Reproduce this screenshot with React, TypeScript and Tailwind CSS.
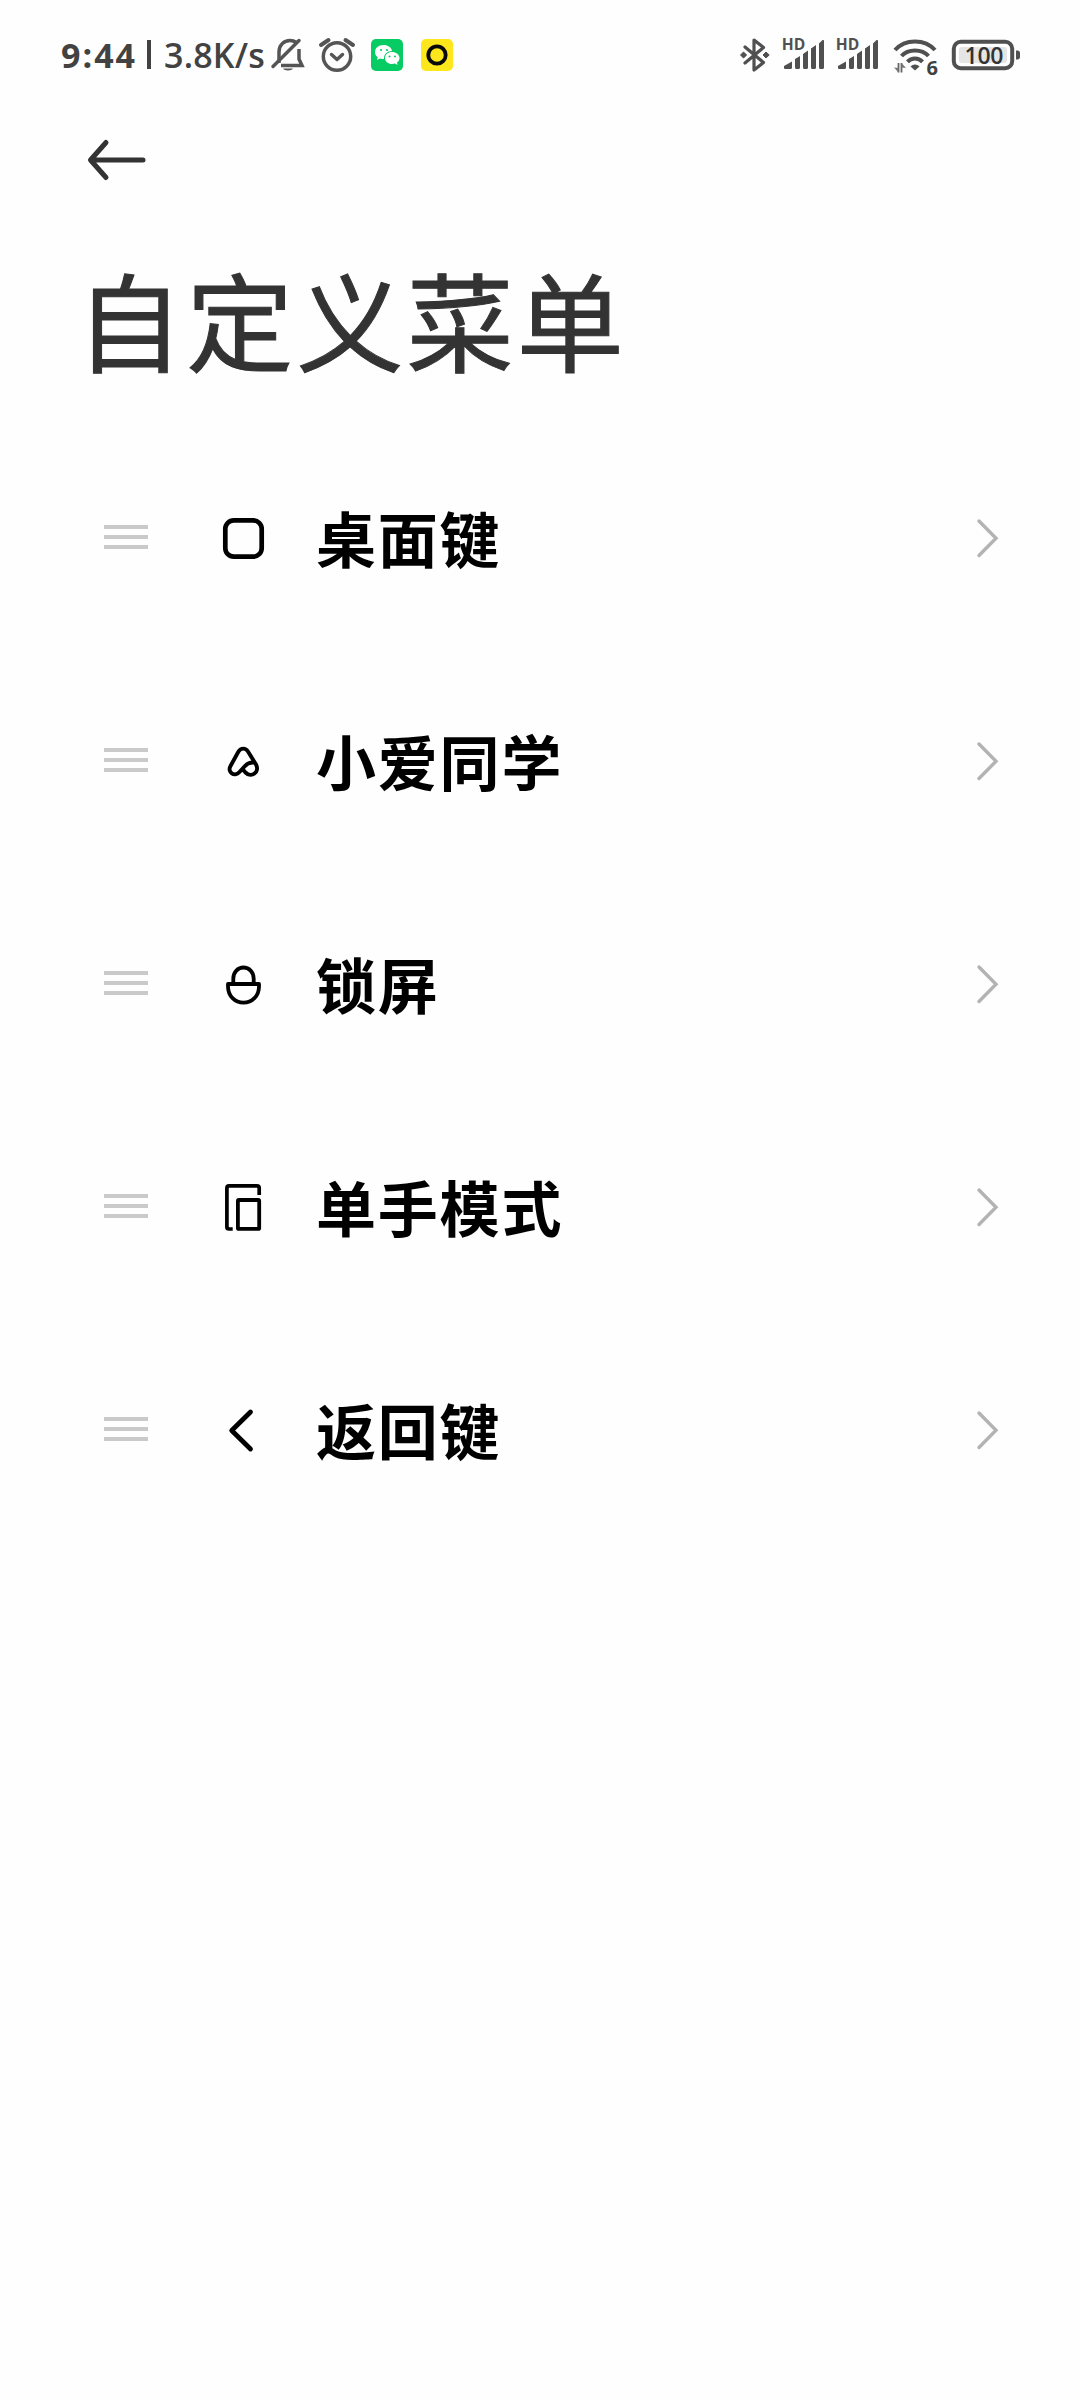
import React from "react";

function StatusBar() {
  return (
    <div className="flex h-[109px] w-full items-center text-[#424242] font-['Open_Sans','Noto_Sans',sans-serif] font-semibold whitespace-nowrap">
      <div className="flex h-[60px] w-[210px] ml-[60px] items-center text-[34px] leading-[60px]">
        <span className="w-[83px] pl-px font-bold tracking-[2px]">9:44</span>
        <span className="ml-[4px] h-[29px] w-[4px] bg-[#424242]" />
        <span className="ml-[13px] tracking-[0.200px]">3.8K/s</span>
      </div>
      <svg className="h-[60px] w-[190px]" viewBox="0 0 190 60" fill="none" stroke="#555" strokeWidth="3.5">
        <g>
          <path d="M9 38V27C9 20 14 15.500 20 15.500C23 15.500 25 16.500 26.500 17.500M29 24V34L32 40.500H11" />
          <path d="M3 41.500L29 15.500" strokeLinecap="round" />
          <path d="M13 43.500H23C22 46 14 46 13 43.500Z" fill="#555" stroke="none" />
        </g>
        <g strokeLinecap="round">
          <circle cx="67" cy="31.500" r="13.700" />
          <path d="M61.500 29.500L67 34.500L72.500 29.500" strokeLinejoin="round" />
          <path d="M51 20L58.500 15M83 20L75.500 15" strokeWidth="4" />
        </g>
        <g stroke="none">
          <rect x="101" y="14" width="32" height="32" rx="5" fill="#07cb63" />
          <path d="M113.500 20C108.500 20 105 23 105 27C105 29.300 106 31 107.700 32.300L107 35L110 33.500C111.500 34 113 34 114 34C113.500 29 117.500 26 122 26C121.500 22.500 118 20 113.500 20Z" fill="#fff" />
          <path d="M122 27C118 27 115 29.600 115 33C115 36.500 118 39 122 39C123 39 124 38.800 125 38.500L127.500 40L127 37.500C128.700 36.400 129.500 34.800 129.500 33C129.500 29.600 126 27 122 27Z" fill="#fff" />
          <g fill="#07cb63">
            <circle cx="111" cy="25" r="1.100" />
            <circle cx="117" cy="25" r="1.100" />
            <circle cx="119.500" cy="31.500" r="1" />
            <circle cx="125" cy="31.500" r="1" />
          </g>
          <rect x="151" y="14" width="32" height="32" rx="5" fill="#fee61c" />
        </g>
        <circle cx="167" cy="30" r="8.700" stroke="#0a0a0a" strokeWidth="3.800" />
      </svg>
      <svg className="ml-[270px] h-[60px] w-[150px]" viewBox="0 0 150 60" fill="none" stroke="#505050">
        <path d="M15 22L33.500 37.500L24 45V15L33.500 22.500L15 38" strokeWidth="3.200" strokeLinejoin="round" strokeLinecap="round" />
        <path d="M13.500 27L16.700 30L13.500 33L10.500 30ZM36 27L39.200 30L36 33L33 30Z" fill="#505050" strokeWidth="1" />
        <SignalBars x={54} />
        <SignalBars x={108} />
      </svg>
      <svg className="h-[60px] w-[150px]" viewBox="0 0 150 60" fill="none" stroke="#505050" strokeWidth="4">
        <path d="M15 25C25 13.500 45 13.500 55 25" />
        <path d="M21.500 31C28 23.500 42 23.500 48.500 31" />
        <path d="M27.500 36.800C31.500 32.500 38.500 32.500 42.500 36.800" />
        <path d="M30.500 41.500C33 38.800 37 38.800 39.500 41.500L35 45.500Z" fill="#505050" stroke="none" />
        <path d="M18.500 38V47.500M21.500 47.500V38" strokeWidth="1.800" stroke="#666" />
        <path d="M14 42.500L18.500 47.500V43ZM26 43L21.500 38V42.500Z" fill="#777" stroke="none" />
        <text x="46.500" y="49.800" fontSize="20" fontWeight="700" fill="#424242" stroke="none">6</text>
        <rect x="73.800" y="16.800" width="58.400" height="26.400" rx="7" />
        <rect x="79" y="22" width="48" height="16" rx="3" fill="#e5e5e5" stroke="none" />
        <path d="M137 25.500H137.500C139 25.500 140 26.500 140 28V32C140 33.500 139 34.500 137.500 34.500H136V25.500Z" fill="#505050" stroke="none" />
        <text x="84.500" y="38.800" fontSize="23" fontWeight="600" textLength="39" fill="#333" stroke="none">100</text>
      </svg>
    </div>
  );
}

function SignalBars({ x }: { x: number }) {
  return (
    <g transform={`translate(${x} 0)`} fill="#505050" stroke="none">
      <text x="-2.200" y="25" fontSize="15.500" fontWeight="700" textLength="23.500" lengthAdjust="spacingAndGlyphs">HD</text>
      <path d="M0 43V41L8 36.500V42.500Q8 44 6.500 44H1Q0 44 0 43ZM11 34L16 31V42.500Q16 44 14.500 44H12.500Q11 44 11 42.500ZM19 29L24 25.500V42.500Q24 44 22.500 44H20.500Q19 44 19 42.500ZM27 23.500L32 20V42.500Q32 44 30.500 44H28.500Q27 44 27 42.500ZM35 18.500L38.500 15Q40 14.500 40 16V42.500Q40 44 38.500 44H36.500Q35 44 35 42.500Z" />
    </g>
  );
}

const HomeIcon = () => <rect x="12.300" y="13.300" width="36.400" height="36.400" rx="8.500" strokeWidth="4.700" />;
const AssistantIcon = () => (
  <path
    d="M35 21.500C32.800 17.700 27.700 17.700 25.500 21.500L17.500 36C14 42 21.500 47.500 26.500 42L31.500 36.500C34.500 33 38 31.500 42.500 33M35 21.500L43 34.500C47 42 38.500 48.500 32.500 42.500L29.500 39"
    strokeWidth="3.900"
  />
);
const LockIcon = () => (
  <path d="M20.300 31V25.500C20.300 19 25 14.500 30.500 14.500C36 14.500 40.700 19 40.700 25.500V31M15 31H46V33.500C46 43 39 49.700 30.500 49.700C22 49.700 15 43 15 33.500Z" strokeWidth="3.800" />
);
const OneHandIcon = () => (
  <>
    <path d="M19.700 53H16Q13.900 53 13.900 51V12Q13.900 9.900 16 9.900H44Q46.200 9.900 46.200 12V19" strokeWidth="3.700" />
    <rect x="24.900" y="24" width="21.300" height="28.900" rx="1" strokeWidth="3.800" />
  </>
);
const BackIcon = () => <path d="M37.500 13L18.700 31.500L37.500 50" strokeWidth="4.800" strokeLinecap="round" />;

const rows = [
  { label: "桌面键", Icon: HomeIcon },
  { label: "小爱同学", Icon: AssistantIcon },
  { label: "锁屏", Icon: LockIcon },
  { label: "单手模式", Icon: OneHandIcon },
  { label: "返回键", Icon: BackIcon },
];

export default function App() {
  return (
    <div className="flex h-[2400px] w-[1080px] flex-col overflow-hidden bg-[#fefefe]">
      <StatusBar />
      <header className="h-[317px] pl-[76px]">
        <button className="mt-[28px] ml-[8px] block" aria-label="返回">
          <svg className="h-[46px] w-[64px]" viewBox="0 0 64 46" fill="none" stroke="#333" strokeWidth="5" strokeLinecap="round" strokeLinejoin="round">
            <path d="M22 5.500L6.500 23L22 40.500M7 23H59" />
          </svg>
        </button>
        <h1 className="mt-[60px] whitespace-nowrap font-['Noto_Sans_CJK_SC',sans-serif] text-[107px] leading-[150px] font-normal tracking-[3.200px] text-[#333] [-webkit-text-stroke:1px_#333]">
          自定义菜单
        </h1>
      </header>
      <main>
        {rows.map(({ label, Icon }) => (
          <div key={label} className="flex h-[223px] items-center pl-[104px]">
            <div className="flex h-[61px] w-[44px] flex-col gap-[6px] pt-[18px]">
              <span className="h-[4px] bg-[#cacaca]" />
              <span className="h-[4px] bg-[#cacaca]" />
              <span className="h-[4px] bg-[#cacaca]" />
            </div>
            <svg className="ml-[65px] h-[61px] w-[61px]" viewBox="0 0 61 61" fill="none" stroke="#000" strokeLinejoin="round">
              <Icon />
            </svg>
            <span className="ml-[42px] w-[644px] pb-[1px] whitespace-nowrap font-['Noto_Sans_CJK_SC',sans-serif] text-[60px] leading-[90px] font-bold tracking-[1.800px] text-black">
              {label}
            </span>
            <svg className="ml-[14px] h-[61px] w-[30px]" viewBox="0 0 30 61" fill="none" stroke="#b3b3b3" strokeWidth="3.400" strokeLinecap="round">
              <path d="M5 14L22 31.300L5 48.500" />
            </svg>
          </div>
        ))}
      </main>
    </div>
  );
}
